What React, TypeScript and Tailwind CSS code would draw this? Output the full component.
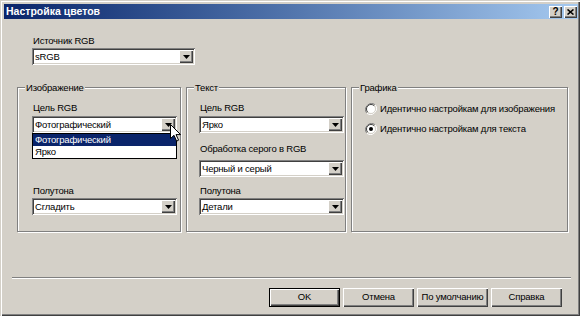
import React from "react";

const sunken =
  "shadow-[inset_1px_1px_0_#808080,inset_-1px_-1px_0_#fff,inset_2px_2px_0_#404040,inset_-2px_-2px_0_#d4d0c8]";
const raised =
  "shadow-[inset_1px_1px_0_#fff,inset_-1px_-1px_0_#404040,inset_-2px_-2px_0_#808080]";

function Arrow() {
  return (
    <svg width="7" height="4" viewBox="0 0 7 4">
      <path d="M0 0h7L3.5 4z" fill="#000" />
    </svg>
  );
}

function Combo({
  value,
  width,
  children,
}: {
  value: string;
  width: number;
  children?: React.ReactNode;
}) {
  return (
    <div
      className={`relative flex h-[17px] bg-white p-[2px] ${sunken}`}
      style={{ width }}
    >
      <div className="flex-1 truncate pl-[1px] text-[9.5px] leading-[13px] tracking-[-0.2px] text-black">
        {value}
      </div>
      <div
        className={`flex h-[13px] w-[14px] items-center justify-center bg-[#d4d0c8] ${raised}`}
      >
        <Arrow />
      </div>
      {children}
    </div>
  );
}

function Label({ text }: { text: string }) {
  return (
    <div className="h-[13px] whitespace-nowrap pl-[1px] text-[9.5px] leading-[13px] tracking-[-0.2px] text-black">
      {text}
    </div>
  );
}

function Group({
  title,
  width,
  className,
  children,
}: {
  title: string;
  width: number;
  className: string;
  children: React.ReactNode;
}) {
  return (
    <div
      className={`relative flex h-[145px] flex-col border border-[#808080] shadow-[inset_1px_1px_0_#fff,1px_1px_0_#fff] ${className}`}
      style={{ width }}
    >
      <span className="absolute -top-[7px] left-[7px] bg-[#d4d0c8] px-[1px] text-[9.5px] leading-[13px] tracking-[-0.2px] text-black">
        {title}
      </span>
      {children}
    </div>
  );
}

function Radio({ checked, text }: { checked?: boolean; text: string }) {
  return (
    <div className="flex h-[13px] items-center">
      <svg width="12" height="12" viewBox="0 0 12 12">
        <path d="M10.2 1.8A6 6 0 0 0 1.8 10.2" stroke="#808080" fill="none" />
        <path d="M1.8 10.2A6 6 0 0 0 10.2 1.8" stroke="#fff" fill="none" />
        <circle cx="6" cy="6" r="4.5" fill="#fff" />
        <path d="M9.2 2.8A4.5 4.5 0 0 0 2.8 9.2" stroke="#404040" fill="none" />
        <path d="M2.8 9.2A4.5 4.5 0 0 0 9.2 2.8" stroke="#d4d0c8" fill="none" />
        {checked && <circle cx="6" cy="6" r="2" fill="#000" />}
      </svg>
      <span className="ml-[3px] whitespace-nowrap text-[9.5px] leading-[13px] tracking-[-0.2px] text-black">
        {text}
      </span>
    </div>
  );
}

function Button({ text, def }: { text: string; def?: boolean }) {
  return (
    <div
      className={`flex h-[19px] w-[71px] items-center justify-center whitespace-nowrap bg-[#d4d0c8] text-[9.5px] tracking-[-0.2px] text-black ${
        def
          ? "shadow-[inset_0_0_0_1px_#000,inset_2px_2px_0_#fff,inset_-2px_-2px_0_#404040,inset_-3px_-3px_0_#808080]"
          : raised
      }`}
    >
      {text}
    </div>
  );
}

export default function App() {
  return (
    <div className="relative flex h-[316px] w-[580px] flex-col bg-[#d4d0c8] pt-[4px] font-['Liberation_Sans',Arial,sans-serif] shadow-[inset_1px_1px_0_#d4d0c8,inset_2px_2px_0_#fff,inset_-1px_-1px_0_#404040,inset_-2px_-2px_0_#808080]">
      {/* title bar */}
      <div className="ml-[4px] mr-[2px] flex h-[15px] items-center bg-gradient-to-r from-[#0a246a] to-[#a6caf0] pl-[2px] pr-[1px]">
        <span className="flex-1 text-[10.5px] font-bold leading-[15px] text-white">
          Настройка цветов
        </span>
        <div
          className={`flex h-[12px] w-[13px] items-center justify-center bg-[#d4d0c8] text-[10px] font-bold leading-none text-black ${raised}`}
        >
          ?
        </div>
        <div
          className={`ml-[2px] flex h-[12px] w-[13px] items-center justify-center bg-[#d4d0c8] ${raised}`}
        >
          <svg width="7" height="6" viewBox="0 0 7 6">
            <path d="M0.5 0.5l6 5M6.5 0.5l-6 5" stroke="#000" strokeWidth="1.6" />
          </svg>
        </div>
      </div>

      {/* source */}
      <div className="ml-[32px] mt-[15px]">
        <Label text="Источник RGB" />
        <div className="mt-[1px]">
          <Combo value="sRGB" width={163} />
        </div>
      </div>

      {/* groups */}
      <div className="ml-[17px] mt-[22px] flex gap-[5px]">
        <Group title="Изображение" width={164} className="pl-[14px] pt-[13px]">
          <Label text="Цель RGB" />
          <div className="relative z-10 mt-[2px]">
            <Combo value="Фотографический" width={145}>
              <div className="absolute left-0 top-full w-[145px] border border-black bg-white text-[9.5px] leading-[12px] tracking-[-0.2px]">
                <div className="h-[12px] bg-[#0a246a] pl-[2px] text-white">
                  Фотографический
                </div>
                <div className="h-[12px] pl-[2px] text-black">Ярко</div>
              </div>
              <svg
                className="absolute left-[138px] top-[8px]"
                width="11"
                height="18"
                viewBox="0 0 11 18"
              >
                <path
                  d="M0.5 0.5v14l3.5-3.2 2.6 5.8 2-0.9-2.6-5.6h4.6z"
                  fill="#fff"
                  stroke="#000"
                />
              </svg>
            </Combo>
          </div>
          <div className="mt-[51px]">
            <Label text="Полутона" />
          </div>
          <div className="mt-[1px]">
            <Combo value="Сгладить" width={145} />
          </div>
        </Group>

        <Group title="Текст" width={160} className="pl-[12px] pt-[13px]">
          <Label text="Цель RGB" />
          <div className="mt-[2px]">
            <Combo value="Ярко" width={145} />
          </div>
          <div className="mt-[9px]">
            <Label text="Обработка серого в RGB" />
          </div>
          <div className="mt-[5px]">
            <Combo value="Черный и серый" width={145} />
          </div>
          <div className="mt-[7px]">
            <Label text="Полутона" />
          </div>
          <div className="mt-[1px]">
            <Combo value="Детали" width={145} />
          </div>
        </Group>

        <Group title="Графика" width={217} className="pl-[13px] pt-[14px]">
          <Radio text="Идентично настройкам для изображения" />
          <div className="mt-[7px]">
            <Radio checked text="Идентично настройкам для текста" />
          </div>
        </Group>
      </div>

      {/* separator */}
      <div className="ml-[12px] mr-[9px] mt-[45px] border-b border-t border-b-white border-t-[#808080]" />

      {/* buttons */}
      <div className="mr-[18px] mt-[9px] flex justify-end gap-[3px]">
        <Button text="OK" def />
        <Button text="Отмена" />
        <Button text="По умолчанию" />
        <Button text="Справка" />
      </div>
    </div>
  );
}
